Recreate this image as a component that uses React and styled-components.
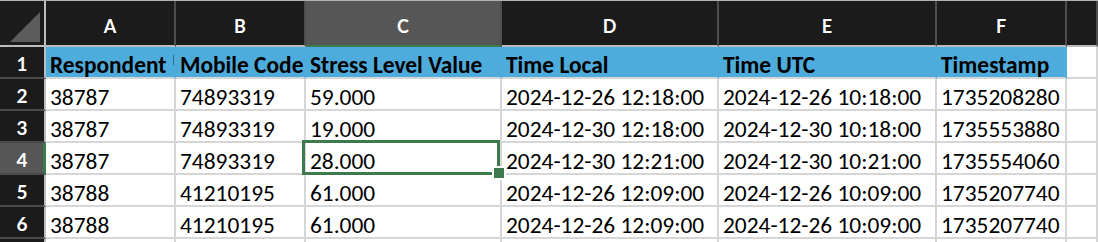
import React from "react";
import styled, { createGlobalStyle, css } from "styled-components";

const GREEN = "#3d7a4e";
const DARK = "#1b1b1b";
const SEL = "#565656";
const BLUE = "#4eacdc";
const GRID = "#d6d6d6";

const GlobalStyle = createGlobalStyle`
  html, body { margin: 0; padding: 0; background: #ffffff; }
  body { font-family: Carlito, Calibri, Lato, sans-serif; overflow: hidden; }
`;

const Sheet = styled.div`
  display: grid;
  grid-template-columns: 46px 130px 130px 196px 217px 218px 130px 1fr;
  grid-template-rows: 46px repeat(7, 32px);
  border-top: 1px solid #b3b3b3;
  width: 1098px;
`;

const Corner = styled.div`
  position: relative;
  background: ${DARK};
  border-right: 2px solid #bdbdbd;
  border-bottom: 2px solid #bdbdbd;
  box-sizing: border-box;
`;

const ColHeader = styled.div`
  box-sizing: border-box;
  background: ${(p) => (p.$selected ? SEL : DARK)};
  border-right: 2px solid #4d4d4d;
  border-bottom: 2px solid ${(p) => (p.$selected ? GREEN : "#bdbdbd")};
  color: #ffffff;
  font-family: Lato, "Open Sans", sans-serif;
  font-size: 18px;
  font-weight: 700;
  line-height: 22px;
  padding-top: 14px;
  text-align: center;
`;

const RowHeader = styled.div`
  box-sizing: border-box;
  background: ${(p) => (p.$selected ? SEL : DARK)};
  border-right: 2px solid ${(p) => (p.$selected ? GREEN : "#bdbdbd")};
  box-shadow: ${(p) => (p.$selected ? `inset -1px 0 0 ${GREEN}` : "none")};
  border-bottom: 2px solid #4a4a4a;
  color: #ffffff;
  font-family: Lato, "Open Sans", sans-serif;
  font-size: 19px;
  font-weight: 700;
  line-height: 24px;
  padding-top: 5px;
  text-align: center;
`;

const Cell = styled.div`
  position: relative;
  box-sizing: border-box;
  background: #ffffff;
  border-right: 2px solid ${GRID};
  border-bottom: 2px solid ${GRID};
  color: #000000;
  font-size: 23.4px;
  line-height: 23px;
  padding: 7px 0 0 4px;
  white-space: nowrap;
  overflow: ${(p) => (p.$selected ? "visible" : "hidden")};
  ${(p) =>
    p.$head &&
    css`
      background: ${BLUE};
      border-right-color: ${BLUE};
      font-weight: 700;
    `}
  ${(p) =>
    p.$mark &&
    css`
      &::after {
        content: "";
        position: absolute;
        right: 0;
        top: 8px;
        width: 1px;
        height: 10px;
        background: #2f6a88;
      }
    `}
`;

const Selection = styled.div`
  position: absolute;
  left: -4px;
  right: 0;
  top: -3px;
  bottom: -2px;
  border: 3px solid ${GREEN};
  pointer-events: none;
  z-index: 2;
`;

const Handle = styled.div`
  position: absolute;
  right: -7px;
  bottom: -6px;
  width: 10px;
  height: 10px;
  background: ${GREEN};
  box-shadow: 0 0 0 2px #ffffff;
`;

const CornerTriangle = () => (
  <svg width="44" height="44" viewBox="0 0 44 44" style={{ position: "absolute", left: 0, top: 0 }}>
    <polygon points="40,11 40,41 10,41" fill="#5c5c5c" />
  </svg>
);

const COLS = ["A", "B", "C", "D", "E", "F", ""];
const HEAD = ["Respondent", "Mobile Code", "Stress Level Value", "Time Local", "Time UTC", "Timestamp"];
const ROWS = [
  ["38787", "74893319", "59.000", "2024-12-26 12:18:00", "2024-12-26 10:18:00", "1735208280"],
  ["38787", "74893319", "19.000", "2024-12-30 12:18:00", "2024-12-30 10:18:00", "1735553880"],
  ["38787", "74893319", "28.000", "2024-12-30 12:21:00", "2024-12-30 10:21:00", "1735554060"],
  ["38788", "41210195", "61.000", "2024-12-26 12:09:00", "2024-12-26 10:09:00", "1735207740"],
  ["38788", "41210195", "61.000", "2024-12-26 12:09:00", "2024-12-26 10:09:00", "1735207740"],
];

export default function App() {
  return (
    <>
      <GlobalStyle />
      <Sheet>
        <Corner>
          <CornerTriangle />
        </Corner>
        {COLS.map((c, i) => (
          <ColHeader key={`h${i}`} $selected={c === "C"}>
            {c}
          </ColHeader>
        ))}

        <RowHeader>1</RowHeader>
        {HEAD.map((h, i) => (
          <Cell key={`t${i}`} $head $mark={i === 0}>
            {h}
          </Cell>
        ))}
        <Cell />

        {ROWS.map((row, r) => (
          <React.Fragment key={`r${r}`}>
            <RowHeader $selected={r === 2}>{r + 2}</RowHeader>
            {row.map((v, c) => {
              const selected = r === 2 && c === 2;
              return (
                <Cell key={`c${r}-${c}`} $selected={selected}>
                  {v}
                  {selected && (
                    <Selection>
                      <Handle />
                    </Selection>
                  )}
                </Cell>
              );
            })}
            <Cell />
          </React.Fragment>
        ))}

        <RowHeader />
        {[0, 1, 2, 3, 4, 5, 6].map((i) => (
          <Cell key={`e${i}`} />
        ))}
      </Sheet>
    </>
  );
}
